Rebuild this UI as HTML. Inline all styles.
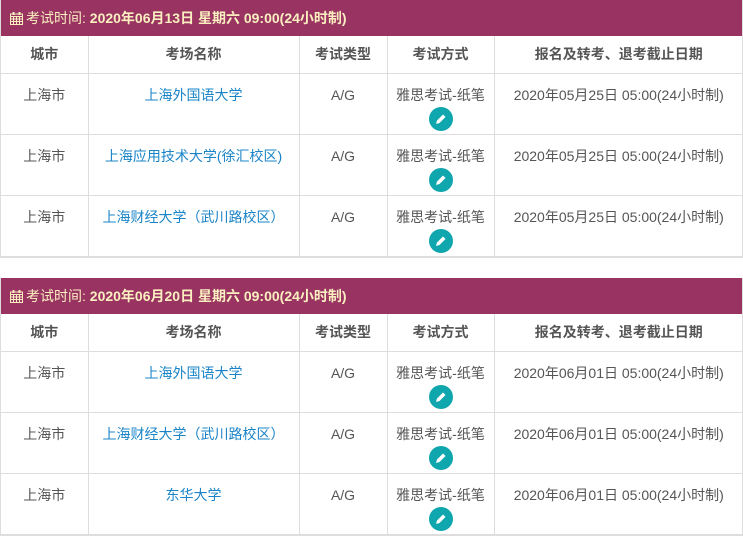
<!DOCTYPE html>
<html><head><meta charset="utf-8"><style>
*{box-sizing:border-box;margin:0;padding:0}
body{width:743px;height:534px;overflow:hidden;background:#fff;font-family:"Liberation Sans","Noto Sans CJK SC",sans-serif;font-size:14px;color:#555}
.panel{position:absolute;left:0;width:743px;border:1px solid #ddd;border-top:none}
.hd{height:36px;background:#983362;color:#fbefc0;font-size:14px;line-height:36px;padding-left:9px;font-weight:bold}
.hd .l{font-weight:normal}
.hd svg{vertical-align:-2px;margin-right:3px}
table{border-collapse:collapse;width:742px;table-layout:fixed}
td,th{border:1px solid #ddd;text-align:center;vertical-align:top}
tr td:first-child,tr th:first-child{border-left:none}
tr td:last-child,tr th:last-child{border-right:none}
tr:first-child th{border-top:none}
th{height:37px;font-weight:bold;color:#555;line-height:34px;padding-top:1px}
td{height:61px;padding-top:11px;line-height:20px}
a{color:#1a84c7;text-decoration:none}
.ic{display:block;width:24px;height:24px;border-radius:50%;background:#10a6ad;margin:2px auto 0;position:relative}
.ic svg{position:absolute;left:6px;top:6px}
</style></head><body>
<div class="panel" style="top:0">
<div class="hd"><svg width="13" height="13" viewBox="0 0 13 13"><rect x="0.5" y="2" width="12" height="10.5" fill="none" stroke="#fbefc0"/><path d="M0.5 4.5h12M0.5 7h12M0.5 9.5h12M3.5 4.5v8M6.5 4.5v8M9.5 4.5v8" stroke="#fbefc0"/><rect x="2.5" y="0" width="2" height="3" fill="#fbefc0"/><rect x="8.5" y="0" width="2" height="3" fill="#fbefc0"/></svg><span class="l">考试时间:</span> 2020年06月13日 星期六 09:00(24小时制)</div>
<table><colgroup><col style="width:87px"><col style="width:211px"><col style="width:88px"><col style="width:107px"><col></colgroup>
<tr><th>城市</th><th>考场名称</th><th>考试类型</th><th>考试方式</th><th>报名及转考、退考截止日期</th></tr>
<tr><td>上海市</td><td><a>上海外国语大学</a></td><td>A/G</td><td>雅思考试-纸笔<span class="ic"><svg width="12" height="12" viewBox="0 0 12 12"><path d="M1 11l1-3.5 6-6 2.5 2.5-6 6z" fill="#fff"/></svg></span></td><td>2020年05月25日 05:00(24小时制)</td></tr>
<tr><td>上海市</td><td><a>上海应用技术大学(徐汇校区)</a></td><td>A/G</td><td>雅思考试-纸笔<span class="ic"><svg width="12" height="12" viewBox="0 0 12 12"><path d="M1 11l1-3.5 6-6 2.5 2.5-6 6z" fill="#fff"/></svg></span></td><td>2020年05月25日 05:00(24小时制)</td></tr>
<tr><td>上海市</td><td><a>上海财经大学（武川路校区）</a></td><td>A/G</td><td>雅思考试-纸笔<span class="ic"><svg width="12" height="12" viewBox="0 0 12 12"><path d="M1 11l1-3.5 6-6 2.5 2.5-6 6z" fill="#fff"/></svg></span></td><td>2020年05月25日 05:00(24小时制)</td></tr>
</table></div>
<div class="panel" style="top:278px">
<div class="hd"><svg width="13" height="13" viewBox="0 0 13 13"><rect x="0.5" y="2" width="12" height="10.5" fill="none" stroke="#fbefc0"/><path d="M0.5 4.5h12M0.5 7h12M0.5 9.5h12M3.5 4.5v8M6.5 4.5v8M9.5 4.5v8" stroke="#fbefc0"/><rect x="2.5" y="0" width="2" height="3" fill="#fbefc0"/><rect x="8.5" y="0" width="2" height="3" fill="#fbefc0"/></svg><span class="l">考试时间:</span> 2020年06月20日 星期六 09:00(24小时制)</div>
<table><colgroup><col style="width:87px"><col style="width:211px"><col style="width:88px"><col style="width:107px"><col></colgroup>
<tr><th>城市</th><th>考场名称</th><th>考试类型</th><th>考试方式</th><th>报名及转考、退考截止日期</th></tr>
<tr><td>上海市</td><td><a>上海外国语大学</a></td><td>A/G</td><td>雅思考试-纸笔<span class="ic"><svg width="12" height="12" viewBox="0 0 12 12"><path d="M1 11l1-3.5 6-6 2.5 2.5-6 6z" fill="#fff"/></svg></span></td><td>2020年06月01日 05:00(24小时制)</td></tr>
<tr><td>上海市</td><td><a>上海财经大学（武川路校区）</a></td><td>A/G</td><td>雅思考试-纸笔<span class="ic"><svg width="12" height="12" viewBox="0 0 12 12"><path d="M1 11l1-3.5 6-6 2.5 2.5-6 6z" fill="#fff"/></svg></span></td><td>2020年06月01日 05:00(24小时制)</td></tr>
<tr><td>上海市</td><td><a>东华大学</a></td><td>A/G</td><td>雅思考试-纸笔<span class="ic"><svg width="12" height="12" viewBox="0 0 12 12"><path d="M1 11l1-3.5 6-6 2.5 2.5-6 6z" fill="#fff"/></svg></span></td><td>2020年06月01日 05:00(24小时制)</td></tr>
</table></div>
</body></html>
